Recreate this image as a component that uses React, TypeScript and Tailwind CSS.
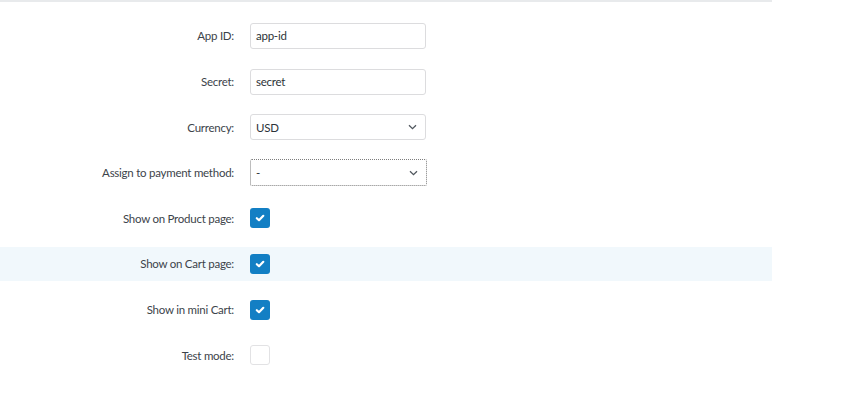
import React from 'react';

type Field =
  | { label: string; kind: 'text'; value: string }
  | { label: string; kind: 'select'; value: string; focused?: boolean }
  | { label: string; kind: 'check'; checked: boolean; highlight?: boolean };

const fields: Field[] = [
  { label: 'App ID:', kind: 'text', value: 'app-id' },
  { label: 'Secret:', kind: 'text', value: 'secret' },
  { label: 'Currency:', kind: 'select', value: 'USD' },
  { label: 'Assign to payment method:', kind: 'select', value: '-', focused: true },
  { label: 'Show on Product page:', kind: 'check', checked: true },
  { label: 'Show on Cart page:', kind: 'check', checked: true, highlight: true },
  { label: 'Show in mini Cart:', kind: 'check', checked: true },
  { label: 'Test mode:', kind: 'check', checked: false },
];

function Chevron() {
  return (
    <svg width="9" height="6" viewBox="0 0 9 6" className="text-[#50575e]">
      <path d="M1 1.2 4.5 4.6 8 1.2" fill="none" stroke="currentColor" strokeWidth="1.3" />
    </svg>
  );
}

function Control({ field }: { field: Field }) {
  if (field.kind === 'text') {
    return (
      <div className="w-[176px] h-[26px] rounded-[3px] border border-[#dcdcde] bg-white px-[5px] flex items-center text-[#2c3338]">
        {field.value}
      </div>
    );
  }
  if (field.kind === 'select') {
    return (
      <div
        className={
          field.focused
            ? 'w-[177px] h-[27px] rounded-[2px] border border-dotted border-[#7d7d7d] bg-white pl-[5px] pr-[8px] flex items-center justify-between text-[#2c3338]'
            : 'w-[176px] h-[26px] rounded-[3px] border border-[#dcdcde] bg-white pl-[5px] pr-[8px] flex items-center justify-between text-[#2c3338]'
        }
      >
        <span>{field.value}</span>
        <Chevron />
      </div>
    );
  }
  if (field.checked) {
    return (
      <div className="w-[20px] h-[20px] rounded-[3px] bg-[#137fc4] flex items-center justify-center">
        <svg width="10" height="8" viewBox="0 0 10 8">
          <path d="M1.8 4.2 4 6.2 8.3 1.8" fill="none" stroke="white" strokeWidth="2.2" strokeLinecap="round" strokeLinejoin="round" />
        </svg>
      </div>
    );
  }
  return <div className="w-[20px] h-[20px] rounded-[3px] border border-[#e2e2e4] bg-white" />;
}

export default function App() {
  return (
    <div className="w-[853px] h-[397px] bg-white" style={{ fontFamily: 'Lato, "Noto Sans", sans-serif' }}>
      <div className="w-[772px] border-t-[2px] border-[#e8eaec] pt-[17px] flex flex-col gap-[11.6px] text-[11.5px] tracking-[-0.25px] text-[#3c434a]">
        {fields.map((f) => (
          <div
            key={f.label}
            className={`h-[34px] flex items-center ${f.kind === 'check' && f.highlight ? 'bg-[#f1f8fc]' : ''}`}
          >
            <div className="w-[234px] text-right">{f.label}</div>
            <div className="ml-[16px]">
              <Control field={f} />
            </div>
          </div>
        ))}
      </div>
    </div>
  );
}
